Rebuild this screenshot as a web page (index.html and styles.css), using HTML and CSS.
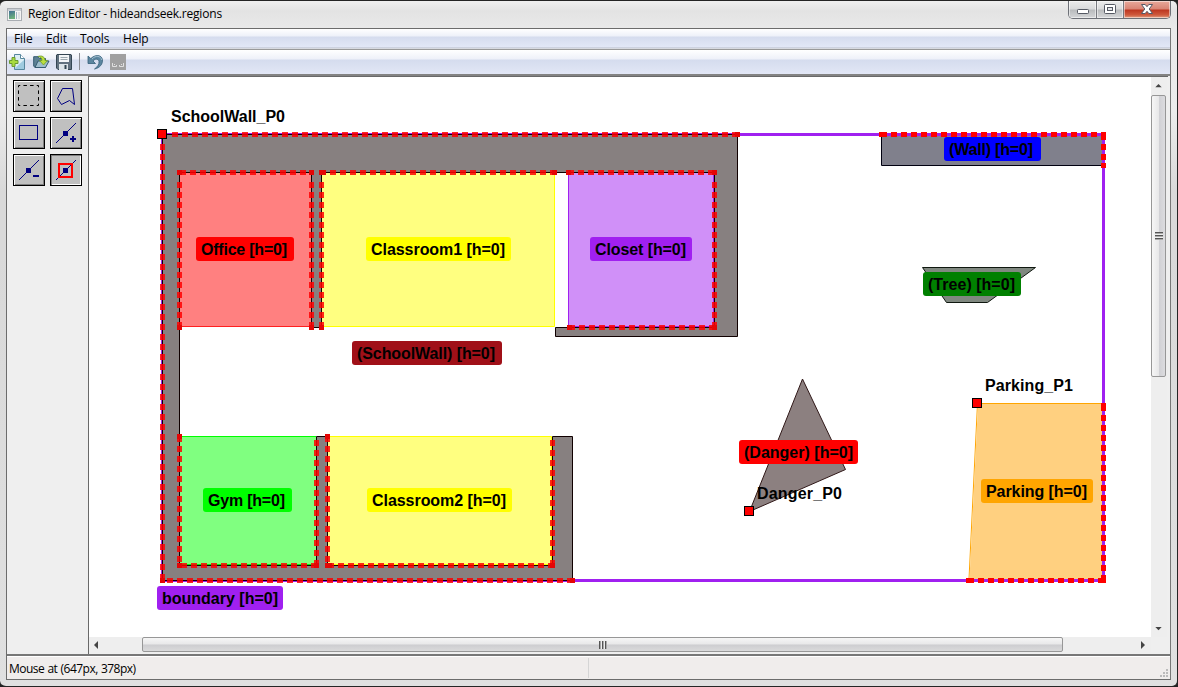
FILE: index.html
```html
<!DOCTYPE html>
<html lang="en">
<head>
<meta charset="utf-8">
<title>Region Editor - hideandseek.regions</title>
<link rel="stylesheet" href="styles.css">
</head>
<body>
<div class="window">
  <header class="titlebar">
    <svg class="app-icon" width="15" height="13" viewBox="0 0 15 13">
      <defs><linearGradient id="app" x1="0" y1="0" x2="0.3" y2="1"><stop offset="0" stop-color="#3f6f94"/><stop offset="1" stop-color="#6db07c"/></linearGradient></defs>
      <rect x=".5" y=".5" width="14" height="12" fill="#f4f4f4" stroke="#a9adb2"/><rect x="1" y="1" width="13" height="2" fill="#c9ced4"/>
      <rect x="2" y="3" width="6" height="8" fill="url(#app)"/><rect x="9" y="4" width="1" height="7" fill="#9fb4c2"/><rect x="11" y="4" width="2" height="7" fill="#dcdfe2"/>
    </svg>
    <span class="title">Region Editor - hideandseek.regions</span>
    <div class="controls">
      <span class="control minimize"><svg width="14" height="14" viewBox="0 0 14 14"><rect x="1.5" y="7.5" width="11" height="4" rx=".8" fill="#fff" stroke="#555963"/></svg></span>
      <span class="control maximize"><svg width="14" height="14" viewBox="0 0 14 14"><rect x="1.5" y="2.5" width="11" height="9" rx="1" fill="#fff" stroke="#555963"/><rect x="4.500" y="5.500" width="5" height="3" fill="#e4e5e8" stroke="#555963"/></svg></span>
      <span class="control close"><svg width="14" height="14" viewBox="0 0 14 14"><path d="M1.500 2.500H5.200L7 4.700 8.800 2.500H12.500L9.200 7 12.500 11.500H8.800L7 9.300 5.200 11.500H1.500L4.800 7Z" fill="#fff" stroke="#555966"/></svg></span>
    </div>
  </header>
  <div class="client">
    <nav class="menubar"><span class="m-file">File</span><span class="m-edit">Edit</span><span class="m-tools">Tools</span><span class="m-help">Help</span></nav>
    <div class="toolbar">
      <svg width="16" height="16" viewBox="0 0 16 16"><path d="M5.500 .5H11.500L15.500 4.500V15.500H5.500Z" fill="#dceef5" stroke="#57879e"/><path d="M11.500 .5V4.500H15.500" fill="#fff" stroke="#57879e"/><path d="M6 14L15 6V15H6Z" fill="#9fcbe0"/><path d="M3 3.500H6V6.500H9V9.500H6V12.500H3V9.500H0.500V6.500H3Z" fill="#a9dc3f" stroke="#6a9b31"/></svg>
      <svg class="open" width="17" height="16" viewBox="0 0 17 16"><path d="M.7 2.700H5L6.500 4.500H12.500V13.500H2L.7 12Z" fill="#5d8194" stroke="#365a70"/><path d="M2 13.500L5 7H16L12.500 13.500Z" fill="#9fbecd" stroke="#365a70"/><path d="M5 2.500C9 1 12 3 12 6.500H14.500L10.500 11 6.500 6.500H9C9 4.500 8 3 5 2.500Z" fill="#bbdf3e" stroke="#6f9d2b" stroke-width=".8"/></svg>
      <svg width="16" height="16" viewBox="0 0 16 16"><path d="M1 .5H15L15.500 1V15.500H2L.5 14V1Z" fill="#61717f" stroke="#344653"/><rect x="3" y="1" width="10" height="7" fill="#f3f6f8"/><path d="M4.500 3.500H11.500M4.500 5.500H11.500" stroke="#9ba7af"/><rect x="3" y="10" width="9" height="6" fill="#dce4e8"/><rect x="8.500" y="11" width="2" height="4" fill="#304450"/></svg>
      <i class="divider"></i>
      <svg class="undo" width="17" height="16" viewBox="0 0 17 16"><path d="M1 2V9.500H8.500L6 7C8 4.500 11.500 4.500 12 7.500 12.400 10 10.500 13 7.500 15 13 13.800 16 10 15.400 5.500 14.500 .5 8 .3 3.800 4.600Z" fill="#5c86a0" stroke="#355f7a" stroke-width=".8"/><path d="M5 5C8.500 1 14 1.800 14.600 6" fill="none" stroke="#a3c0d0"/></svg>
      <svg class="redo" width="16" height="16" viewBox="0 0 16 16"><rect width="16" height="16" fill="#a0a0a0"/><path d="M2.500 9V12.500H6.500V11M9.500 11V12.500H13.500V9M4.500 11V10M11.500 11V10" fill="none" stroke="#e0e0e0"/></svg>
    </div>
    <main class="workspace">
      <aside class="palette">
        <span class="tool"><svg width="28" height="28" viewBox="0 0 28 28"><rect x="3.500" y="3.500" width="20" height="20" fill="none" stroke="#000" stroke-dasharray="3.500 3.167" stroke-dashoffset="1.750"/></svg></span>
        <span class="tool"><svg width="28" height="28" viewBox="0 0 28 28"><path d="M10.500 6.500H20.500L22.500 22.500 17.500 18.500 9.500 22.500 5.500 16.500Z" fill="none" stroke="#000080"/></svg></span>
        <span class="tool"><svg width="28" height="28" viewBox="0 0 28 28"><rect x="4.500" y="6.500" width="18" height="14" fill="none" stroke="#000080"/></svg></span>
        <span class="tool"><svg width="28" height="28" viewBox="0 0 28 28"><path d="M4 24L24 4" stroke="#000080"/><path d="M11 12H16V17H11ZM18 19H20V17H22V19H24V21H22V23H20V21H18Z" fill="#000080"/></svg></span>
        <span class="tool"><svg width="28" height="28" viewBox="0 0 28 28"><path d="M4 24L24 4" stroke="#000080"/><path d="M11 12H16V17H11ZM18 19H24V21H18Z" fill="#000080"/></svg></span>
        <span class="tool pressed"><svg width="28" height="28" viewBox="0 0 28 28"><path d="M4 24L24 4" stroke="#000080"/><rect x="7" y="8" width="13" height="13" fill="none" stroke="red" stroke-width="2"/><path d="M11 12H16V17H11Z" fill="#000080"/></svg></span>
      </aside>
      <section class="view">
        <svg class="map" width="1062" height="560" viewBox="89 77 1062 560">
          <rect x="162.500" y="134.500" width="941" height="446" fill="none" stroke="#a020f0" stroke-width="3"/>
          <g class="regions">
            <path d="M162.500 134.500H737.500V336.500H555.500V327.500H714.500V172.500H321.500V327.500H311.500V172.500H179.500V565.500H316.500V436.500H327.500V565.500H552.500V436.500H572.500V580.500H162.500Z" fill="#878080" stroke="#100000"/>
            <path d="M881.500 165.500H1103M881.500 134.500V165.500" fill="none" stroke="#000010"/>
            <rect x="882" y="136" width="220" height="29" fill="#80808c"/>
            <path d="M922.500 267.500H1035.500L987.500 302.500H946.500Z" fill="#808880" stroke="#101810"/>
            <path d="M802.500 379L845.500 469.500 749.500 511.500Z" fill="#8c8080" stroke="#301818"/>
            <path d="M977.500 403.500H1102M977.500 403.500L969 579" fill="none" stroke="#ffa500"/>
            <path d="M978 404H1102V579H969.500Z" fill="#ffd080"/>
            <path d="M180 173H311V326H180Z" fill="#ff8080"/><path d="M180 326.500H311" stroke="#ff2020"/>
            <path d="M322 173H554V326H322Z" fill="#ffff80"/><path d="M322 326.500H554.500V173" fill="none" stroke="#ff0"/>
            <path d="M569 173H713V326H569Z" fill="#d090f8"/><path d="M568.500 173V326.500H713.500V173" fill="none" stroke="#a020f0"/>
            <path d="M180 437H316V564H180Z" fill="#80ff80"/><path d="M180 436.500H316M180 564.500H316" stroke="#0f0"/>
            <path d="M328 437H551V564H328Z" fill="#ffff80"/><path d="M328 436.500H551.500V564.500H328" fill="none" stroke="#ff0"/>
          </g>
          <g class="snap inner">
            <path d="M171.700 134.500H740"/><path d="M162.500 143.700V582.500"/><path d="M167 580.500H575"/>
            <path d="M179.500 172.500H314"/><path d="M179.500 182V329.500"/><path d="M311.500 182V329.500"/>
            <path d="M330 172.500H557.500"/><path d="M321.500 182V329.500"/>
            <path d="M568 172.500H717"/><path d="M714.500 182V330"/><path d="M569 327.500H717"/>
            <path d="M179.500 436V568"/><path d="M181 565.500H319"/><path d="M316.500 440V568"/>
            <path d="M327.500 436V568"/><path d="M327.500 565.500H555"/><path d="M552.500 440V568"/>
          </g>
          <g class="ends inner-ends">
            <path d="M735 132H740V137H735ZM160 578H165V583H160ZM570 578H575V583H570ZM177 170H182V175H177ZM309 170H314V175H309ZM319 170H326V175H319ZM552 170H557V175H552ZM177 325H182V330H177ZM309 325H314V330H309ZM319 325H324V330H319ZM566 170H571V175H566ZM712 170H717V175H712ZM712 325H717V330H712ZM567 325H572V330H567ZM177 434H182V439H177ZM325 434H330V439H325ZM177 563H182V568H177ZM314 563H319V568H314ZM325 563H332V568H325ZM550 563H555V568H550Z"/>
          </g>
          <g class="snap"><path d="M881 134.500H1106"/><path d="M1103.500 134V168"/><path d="M1103.500 405V583"/><path d="M968 580.500H1106"/></g>
          <g class="ends"><path d="M879 132H884V137H879ZM1101 132H1106V137H1101ZM1101 163H1106V168H1101ZM1101 403H1106V408H1101ZM966 578H971V583H966ZM1101 578H1106V583H1101Z"/></g>
          <g class="handles"><rect x="157.500" y="129.500" width="9" height="9"/><rect x="744.500" y="506.500" width="9" height="9"/><rect x="972.500" y="398.500" width="9" height="9"/></g>
          <g class="labels">
            <rect x="196" y="237" width="98" height="24" rx="3" fill="red"/><text x="201" y="255" textLength="86">Office [h=0]</text>
            <rect x="366" y="237" width="145" height="24" rx="3" fill="#ff0"/><text x="371" y="255" textLength="134">Classroom1 [h=0]</text>
            <rect x="590" y="237" width="102" height="24" rx="3" fill="#a020f0"/><text x="595" y="255" textLength="91">Closet [h=0]</text>
            <rect x="352" y="341" width="150" height="24" rx="3" fill="#a01018"/><text x="357" y="359" textLength="138">(SchoolWall) [h=0]</text>
            <rect x="203" y="488" width="89" height="24" rx="3" fill="#0f0"/><text x="208" y="506" textLength="77">Gym [h=0]</text>
            <rect x="367" y="488" width="145" height="24" rx="3" fill="#ff0"/><text x="372" y="506" textLength="134">Classroom2 [h=0]</text>
            <rect x="157" y="586" width="126" height="24" rx="3" fill="#a020f0"/><text x="162" y="604" textLength="116">boundary [h=0]</text>
            <rect x="944" y="137" width="97" height="24" rx="3" fill="#00f"/><text x="949" y="155" textLength="84">(Wall) [h=0]</text>
            <rect x="923" y="272" width="98" height="24" rx="3" fill="green"/><text x="928" y="290" textLength="87">(Tree) [h=0]</text>
            <rect x="739" y="440" width="119" height="24" rx="3" fill="red"/><text x="744" y="458" textLength="109">(Danger) [h=0]</text>
            <rect x="981" y="479" width="112" height="24" rx="3" fill="orange"/><text x="986" y="497" textLength="101">Parking [h=0]</text>
            <text x="171" y="122" textLength="114">SchoolWall_P0</text><text x="757" y="499" textLength="85">Danger_P0</text><text x="985" y="391" textLength="88">Parking_P1</text>
          </g>
        </svg>
        <div class="vscroll"><svg class="arrow" width="7" height="4" viewBox="0 0 8 5"><path d="M0 4L4 0 8 4Z" fill="#444"/></svg><div class="thumb"><i class="grip"></i></div><svg class="arrow" width="7" height="4" viewBox="0 0 8 5"><path d="M0 0L4 4 8 0Z" fill="#444"/></svg></div>
        <div class="hscroll"><svg class="arrow" width="5" height="8" viewBox="0 0 5 8"><path d="M4 0L0 4 4 8Z" fill="#444"/></svg><div class="thumb"><i class="grip"></i></div><svg class="arrow" width="5" height="8" viewBox="0 0 5 8"><path d="M0 0L4 4 0 8Z" fill="#444"/></svg></div>
        <div class="corner"></div>
      </section>
    </main>
    <footer class="status"><span class="mouse">Mouse at (647px, 378px)</span><svg class="sizegrip" width="9" height="9" viewBox="0 0 9 9"><path d="M6 0H8V2H6ZM3 3H5V5H3ZM6 3H8V5H6ZM0 6H2V8H0ZM3 6H5V8H3ZM6 6H8V8H6Z" fill="#bbb"/></svg></footer>
  </div>
</div>
</body>
</html>
```
FILE: styles.css
```css
* { box-sizing: border-box; }
body { margin: 0; background: #222; font: 12px "Open Sans", "Noto Sans", sans-serif; color: #000; overflow: hidden; }
svg { display: block; flex: none; }
.window { width: 1178px; height: 687px; padding: 0 6px 6px 6px; border: solid #252525; border-width: 1px 1px 1px 0; border-radius: 6px; background: linear-gradient(#f0f0f0, #e3e3e3 10px, #e9e9e9 27px, #ececec 110px, #d9d9d9 190px, #d9d9d9 250px, #e0e0e0); }
.titlebar { height: 27px; display: flex; align-items: center; padding-left: 1px; }
.app-icon { margin-top: -1px; }
.title { margin: -2px auto 0 6px; letter-spacing: -.2px; white-space: nowrap; }
.controls { display: flex; height: 18px; align-self: flex-start; border: 1px solid #6d7077; border-top: 0; border-radius: 0 0 5px 5px; overflow: hidden; }
.control { width: 28px; display: flex; justify-content: center; align-items: center; background: linear-gradient(#ececec, #d9dadb 8px, #b9bbbd 9px, #d5d6d8); border-right: 1px solid #77797f; box-shadow: inset 0 0 0 1px #ffffff80; }
.control svg { margin-top: -1px; }
.maximize { width: 27px; }
.close { width: 46px; border-right: 0; background: linear-gradient(#e8a99b, #d98474 8px, #bd3620 9px, #cf5a3d 14px, #e2a083); }
.client { height: 652px; display: flex; flex-direction: column; border: 1px solid #6c6c6c; border-right-color: #777; background: #efefef; }
.menubar { height: 20px; flex: none; display: flex; align-items: center; padding-left: 7px; background: linear-gradient(#fff, #eef1f9 7px, #d5dcee 8px, #e2e7f6 18px, #b8bdca 19px, #f5f5f5 20px); }
.menubar span { line-height: 18px; letter-spacing: -.1px; }
.m-file { width: 32px; } .m-edit { width: 34px; } .m-tools { width: 43px; }
.toolbar { height: 25px; flex: none; display: flex; align-items: center; padding: 0 0 1px 3px; border-top: 1px solid #999; background: linear-gradient(#fff, #eef1f9 9px, #d5dcee 10px, #e2e7f6 24px); }
.open { margin-left: 7px; margin-right: 6px; }
.divider { width: 1px; height: 17px; background: #8c8e94; margin-left: 7px; }
.undo { margin-left: 7px; }
.redo { margin-left: 6px; }
.toolbar svg:first-child { margin-left: -1px; margin-right: 1px; }
.workspace { flex: 1; display: flex; border-top: 2px solid #838383; border-bottom: 2px solid #777; }
.palette { width: 81px; flex: none; padding: 4px 0 0 6px; display: grid; grid-template-columns: 32px 32px; grid-auto-rows: 32px; gap: 5px; }
.tool { border: 1px solid #000; background: #c0c0c0; box-shadow: inset 1px 1px #fff, inset -1px -1px #808080; padding: 1px; }
.pressed { box-shadow: inset 1px 1px #808080, inset -1px -1px #fff; }
.view { width: 1080px; display: grid; grid-template-columns: 1062px 16px; grid-template-rows: 560px 16px; border-left: 1px solid #696969; border-top: 1px solid #696969; background: #efefef; }
.map { background: #fff; }
.vscroll { display: flex; flex-direction: column; align-items: center; background: #eee; padding: 7px 1px 6px 0; }
.hscroll { display: flex; align-items: center; background: #eee; padding: 0 5px 1px; }
.thumb { display: flex; align-items: center; justify-content: center; border: 1px solid #979797; border-radius: 2px; }
.vscroll .thumb { width: 15px; height: 282px; margin: 7px 0 auto; background: linear-gradient(90deg, #f6f6f6, #e8e8e9 50%, #d0d0d4 52%, #dcdcdf); }
.hscroll .thumb { width: 921px; height: 15px; margin: 0 auto 0 43px; background: linear-gradient(#f6f6f6, #e8e8e9 48%, #cdcdd0 52%, #dadadb); }
.grip { width: 8px; height: 8px; }
.vscroll .grip { background: repeating-linear-gradient(#555 0 1px, #aaa 1px 2px, #eee 2px 3px); }
.hscroll .grip { background: repeating-linear-gradient(90deg, #555 0 1px, #aaa 1px 2px, #eee 2px 3px); }
.status { height: 23px; flex: none; display: flex; background: #f0edec; border-top: 1px solid #fff; }
.mouse { width: 582px; padding-left: 2px; border-right: 1px solid #d5d5d5; margin: 1px 0; line-height: 21px; letter-spacing: -.52px; word-spacing: .6px; white-space: nowrap; }
.sizegrip { margin: auto 1px 1px auto; }
.snap path { fill: none; stroke: #f00; stroke-width: 5; stroke-dasharray: 6 4; shape-rendering: crispEdges; }
.ends { fill: #f00; }
.snap.inner path { stroke: #ff0000d8; }
.inner-ends { fill: #e40505; }
.handles rect { fill: #f00; stroke: #000; }
.labels text { font: bold 16px "Liberation Sans", Arial, sans-serif; fill: #000; }
```
